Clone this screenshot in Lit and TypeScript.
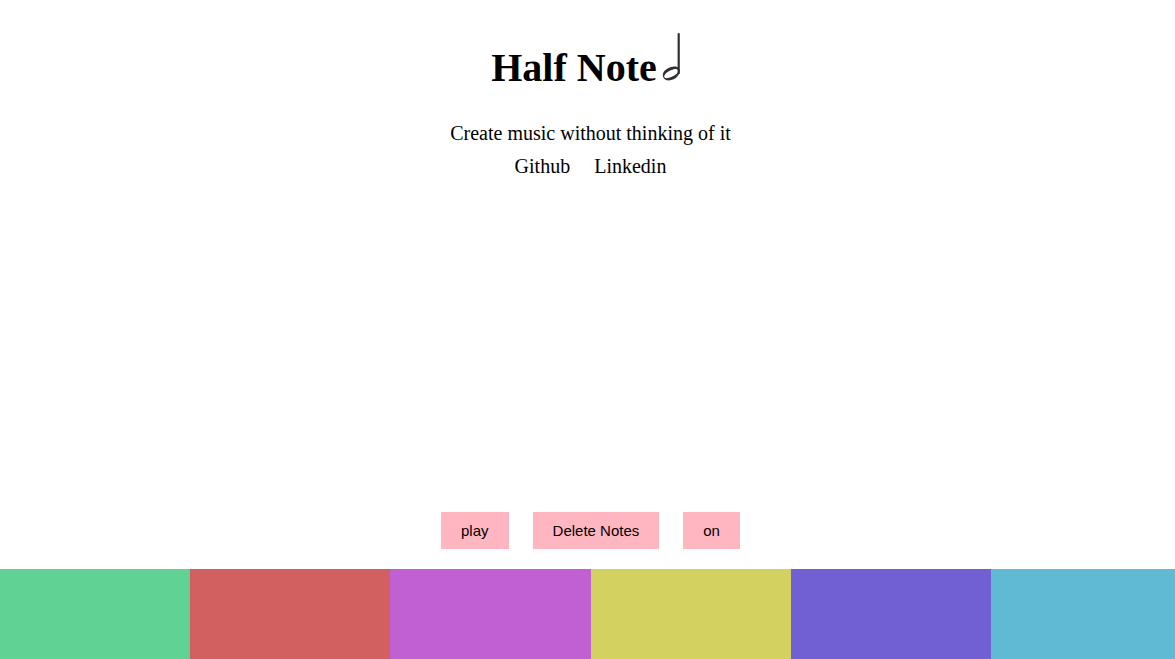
import { LitElement, html, css } from "lit";
import { customElement } from "lit/decorators.js";

@customElement("app-root")
export class AppRoot extends LitElement {
  static styles = css`
    :host { display: flex; flex-direction: column; height: 659px; overflow: hidden; background: #fff; color: #000; font-family: "Liberation Serif", "Times New Roman", serif; }
    header { display: flex; flex-direction: column; align-items: center; padding: 28px 0 0 6px; }
    h1 { display: flex; align-items: flex-start; margin: 0; height: 89px; font-size: 40px; line-height: 80px; font-weight: 700; }
    .note { width: 33px; height: 60px; }
    p { margin: 0; font-size: 20px; line-height: 33px; }
    nav { display: flex; gap: 24px; font-size: 20px; line-height: 33px; }
    .controls { display: flex; justify-content: center; gap: 24px; margin-top: auto; padding: 0 0 20px 6px; }
    button { border: 0; border-radius: 0; background: #ffb6c1; color: #000; font: 15px/17px "Liberation Sans", Arial, sans-serif; padding: 10px 20px; height: 37px; }
    .pads { display: grid; grid-template-columns: 190px 200px 201px 200px 200px 1fr; height: 90px; }
    .green { background: #60d394; }
    .red { background: #d36060; }
    .pink { background: #c060d3; }
    .yellow { background: #d3d160; }
    .purple { background: #7060d3; }
    .blue { background: #60bad3; }
  `;
  render() {
    return html`
      <header>
        <h1>Half Note<svg class="note" viewBox="0.9 0 33 60"><g fill="#303030" fill-rule="evenodd"><path d="M21.5 5.5q1.1-.8 2.2 0V46h-2.2z"/><path d="M23.6 43.5c.8-4.8-4.5-6.2-9.5-4.3-5 1.7-8.1 5.5-7.2 9.2.8 3.7 5.4 5 10 3.2 3.7-1.4 6.2-4.6 6.7-8.1zM21.9 41.9c1.2 2-2 4.9-5.8 6.6-4 1.9-7 2.3-7.8.7-.9-1.8 1.8-4.7 5.4-6.5 3.8-1.8 7.1-2.5 8.2-.8z"/></g></svg></h1>
        <p>Create music without thinking of it</p>
        <nav><span>Github</span><span>Linkedin</span></nav>
      </header>
      <div class="controls"><button>play</button><button>Delete Notes</button><button>on</button></div>
      <div class="pads"><div class="green"></div><div class="red"></div><div class="pink"></div><div class="yellow"></div><div class="purple"></div><div class="blue"></div></div>
    `;
  }
}
